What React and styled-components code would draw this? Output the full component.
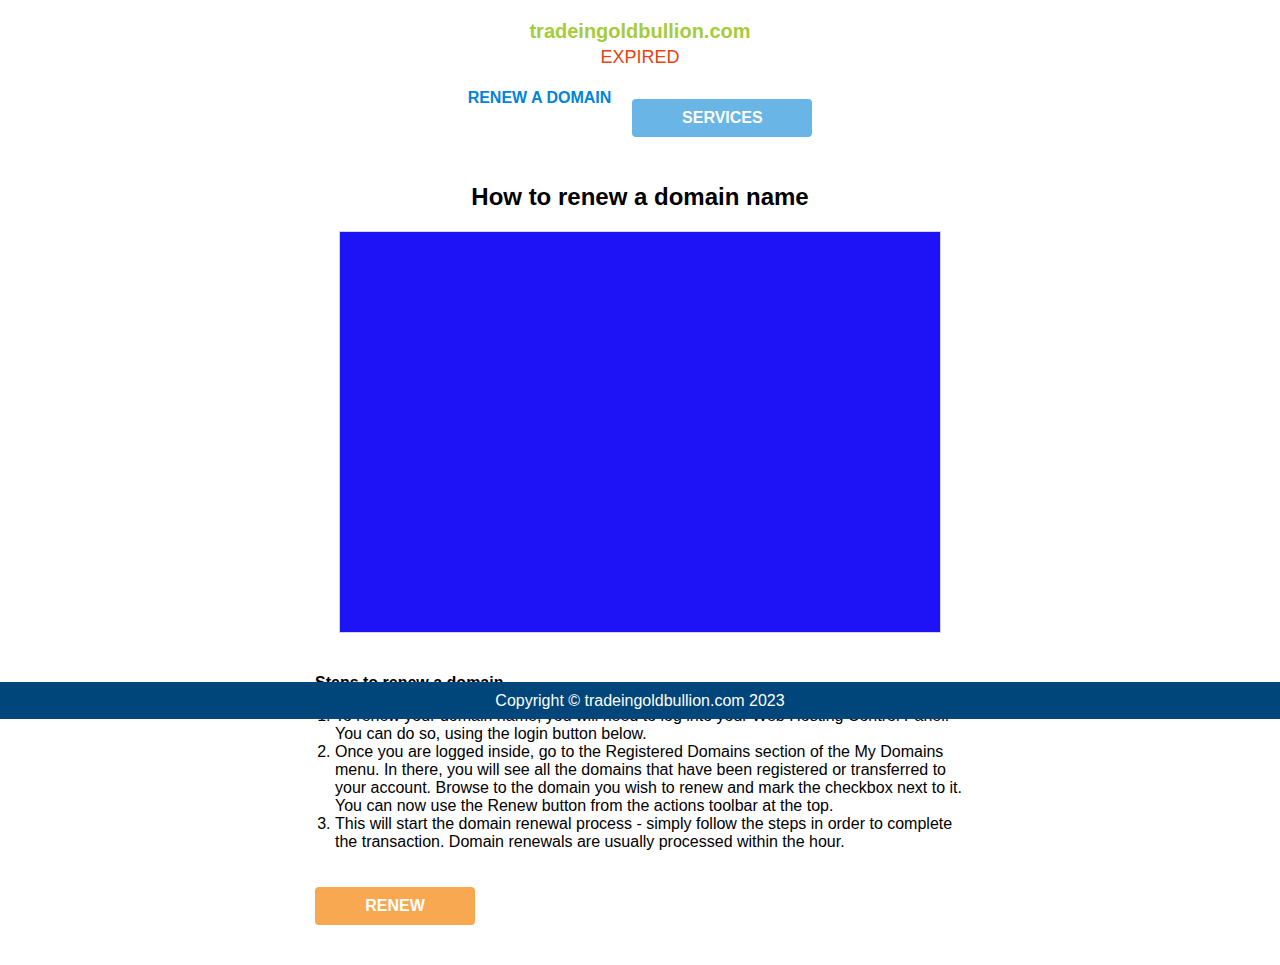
import React from 'react';
import styled, { createGlobalStyle } from 'styled-components';

const GlobalStyle = createGlobalStyle`
  body {
    margin: 0;
    font-family: "Liberation Sans", Arial, sans-serif;
    background: #fff;
    color: #000;
  }
`;

const steps = [
  'To renew your domain name, you will need to log into your Web Hosting Control Panel. You can do so, using the login button below.',
  'Once you are logged inside, go to the Registered Domains section of the My Domains menu. In there, you will see all the domains that have been registered or transferred to your account. Browse to the domain you wish to renew and mark the checkbox next to it. You can now use the Renew button from the actions toolbar at the top.',
  'This will start the domain renewal process - simply follow the steps in order to complete the transaction. Domain renewals are usually processed within the hour.',
];

const App = () => {
  return (
    <Page>
      <GlobalStyle />
      <Header>
        <DomainName>tradeingoldbullion.com</DomainName>
        <Status>EXPIRED</Status>
        <Nav>
          <NavLink href="#">RENEW A DOMAIN</NavLink>
          <NavButton $color="#69b5e5">SERVICES</NavButton>
        </Nav>
      </Header>

      <Main>
        <Heading>How to renew a domain name</Heading>
        <Video />
        <Content>
          <StepsTitle>Steps to renew a domain</StepsTitle>
          <Steps>
            {steps.map((s, i) => (
              <li key={i}>{s}</li>
            ))}
          </Steps>
          <Button $color="#f9a852" $width="160px">RENEW</Button>
        </Content>
      </Main>

      <Footer>Copyright © tradeingoldbullion.com 2023</Footer>
    </Page>
  );
};

const Page = styled.div`
  position: relative;
  min-height: 965px;
`;

const Header = styled.header`
  display: flex;
  flex-direction: column;
  align-items: center;
  padding-top: 20px;
`;

const DomainName = styled.div`
  font-size: 20px;
  font-weight: 700;
  color: #a5cc3a;
  line-height: 22px;
`;

const Status = styled.div`
  font-size: 18px;
  color: #e84310;
  line-height: 22px;
  margin-top: 4px;
`;

const Nav = styled.nav`
  display: flex;
  align-items: flex-start;
  gap: 21px;
  margin-top: 21px;
`;

const NavLink = styled.a`
  font-size: 16px;
  font-weight: 700;
  color: #0084d8;
  text-decoration: none;
  line-height: 18px;
`;

const Button = styled.button`
  width: ${(p) => p.$width || '180px'};
  height: 38px;
  border: none;
  border-radius: 4px;
  background: ${(p) => p.$color};
  color: #fff;
  font-family: "Liberation Sans", Arial, sans-serif;
  font-size: 16px;
  font-weight: 700;
  cursor: pointer;
  padding: 0;
`;

const NavButton = styled(Button)`
  margin-top: 10px;
`;

const Main = styled.main`
  display: flex;
  flex-direction: column;
  align-items: center;
`;

const Heading = styled.h2`
  font-size: 24px;
  font-weight: 700;
  line-height: 28px;
  margin: 46px 0 20px;
`;

const Video = styled.div`
  width: 602px;
  height: 402px;
  background: #1e12f7;
  border: 1px solid #d6d6d6;
  box-sizing: border-box;
`;

const Content = styled.section`
  width: 650px;
  margin-top: 41px;
  padding-bottom: 40px;
`;

const StepsTitle = styled.div`
  font-size: 16px;
  font-weight: 700;
  line-height: 18px;
`;

const Steps = styled.ol`
  margin: 15px 0 36px;
  padding-left: 20px;
  font-size: 16px;
  line-height: 18px;
`;

const Footer = styled.footer`
  position: absolute;
  top: 682px;
  left: 0;
  right: 0;
  height: 37px;
  background: #00467a;
  color: #fff;
  font-size: 16px;
  display: flex;
  align-items: center;
  justify-content: center;
`;

export default App;
